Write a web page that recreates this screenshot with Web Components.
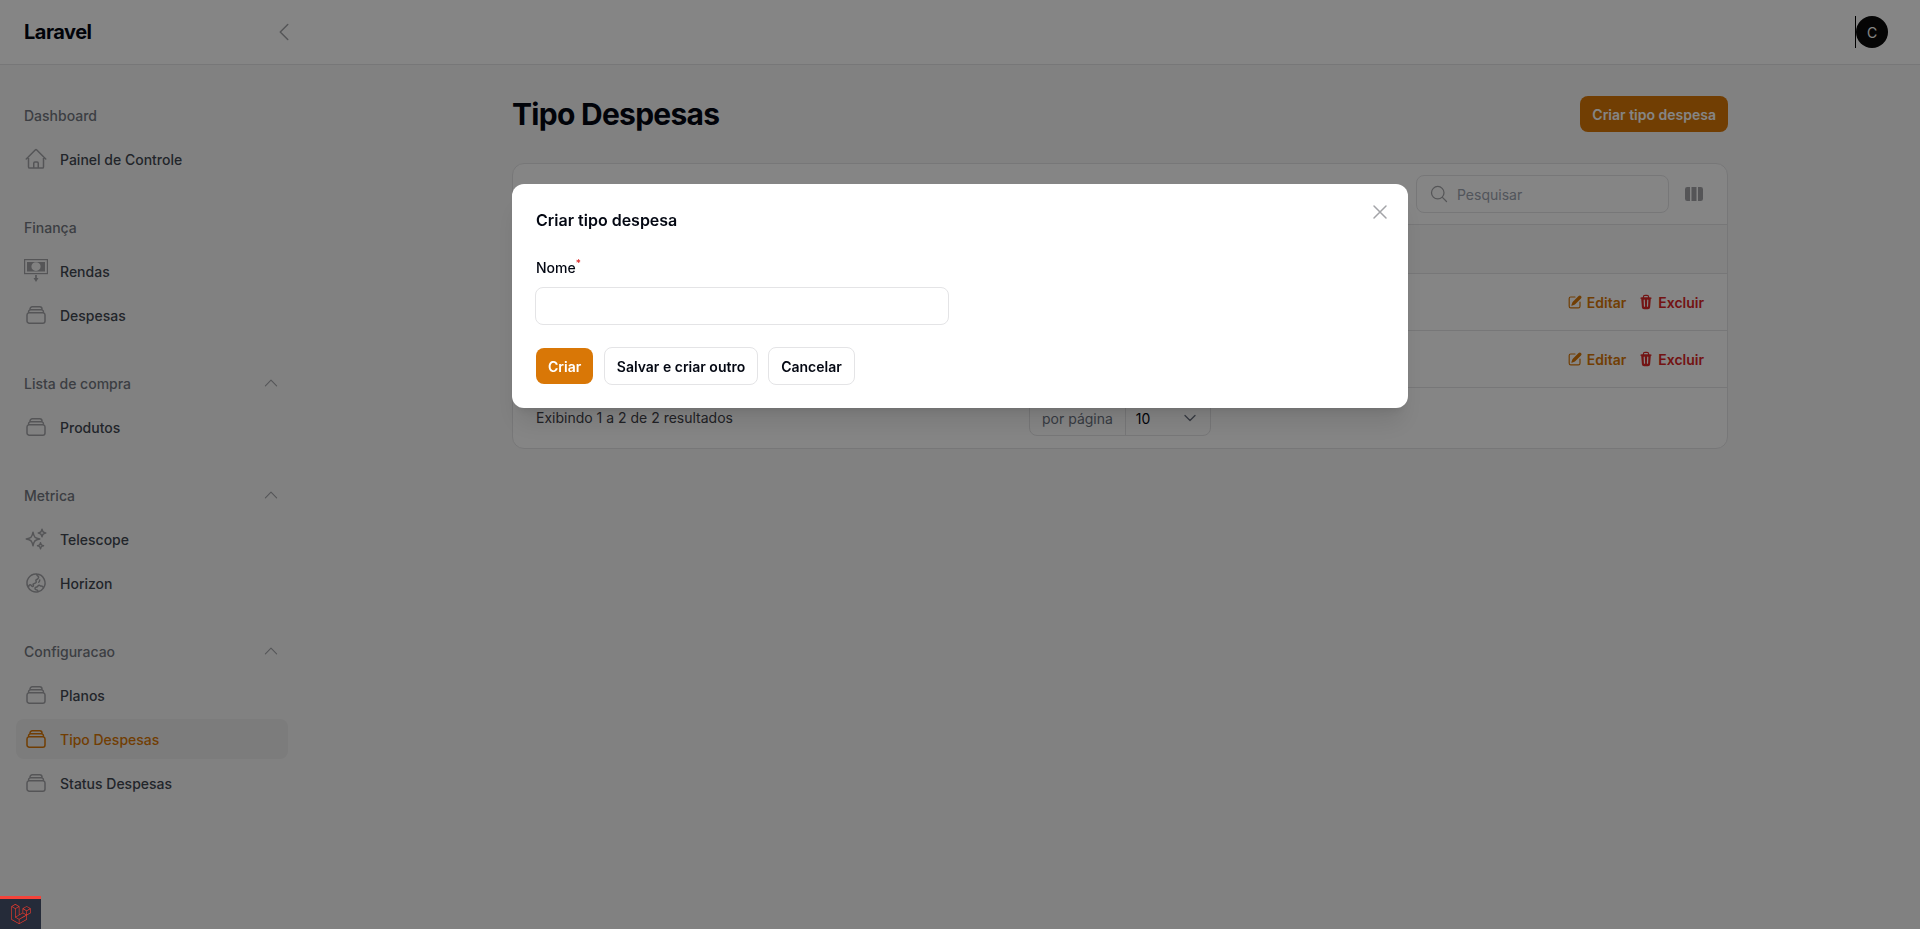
<!DOCTYPE html>
<html lang="pt"><head><meta charset="utf-8"><title>Tipo Despesas</title>
<style>
html,body{margin:0;height:100%}
body{font-family:Inter,"Liberation Sans",sans-serif;background:#f8f8f8;color:#030712;overflow:hidden}
</style></head><body>
<app-shell>
  <side-bar slot="side"></side-bar>
  <page-main slot="main"></page-main>
</app-shell>
<modal-overlay>
  <create-modal></create-modal>
</modal-overlay>
<debug-tab></debug-tab>
<script>
const P={
home:'M2.25 12l8.954-8.955c.44-.439 1.152-.439 1.591 0L21.75 12M4.5 9.75v10.125c0 .621.504 1.125 1.125 1.125H9.75v-4.875c0-.621.504-1.125 1.125-1.125h2.25c.621 0 1.125.504 1.125 1.125V21h4.125c.621 0 1.125-.504 1.125-1.125V9.75M8.25 21h8.25',
stack:'M6 6.878V6a2.25 2.25 0 012.25-2.25h7.5A2.25 2.25 0 0118 6v.878m-12 0c.235-.083.487-.128.75-.128h10.5c.263 0 .515.045.75.128m-12 0A2.251 2.251 0 004.5 9v.878m13.5-3A2.25 2.25 0 0119.5 9v.878m0 0a2.246 2.246 0 00-.75-.128H5.25c-.263 0-.515.045-.75.128m15 0A2.25 2.25 0 0121 12v6a2.25 2.25 0 01-2.25 2.25H5.25A2.25 2.25 0 013 18v-6c0-.98.626-1.813 1.5-2.122',
spark:'M9.813 15.904L9 18.75l-.813-2.846a4.5 4.5 0 00-3.09-3.09L2.25 12l2.846-.813a4.5 4.5 0 003.09-3.09L9 5.25l.813 2.846a4.5 4.5 0 003.09 3.09L15.75 12l-2.846.813a4.5 4.5 0 00-3.09 3.09zM18.259 8.715L18 9.75l-.259-1.035a3.375 3.375 0 00-2.455-2.456L14.25 6l1.036-.259a3.375 3.375 0 002.455-2.456L18 2.25l.259 1.035a3.375 3.375 0 002.456 2.456L21.75 6l-1.035.259a3.375 3.375 0 00-2.456 2.456zM16.894 20.567L16.5 21.75l-.394-1.183a2.25 2.25 0 00-1.423-1.423L13.5 18.75l1.183-.394a2.25 2.25 0 001.423-1.423l.394-1.183.394 1.183a2.25 2.25 0 001.423 1.423l1.183.394-1.183.394a2.25 2.25 0 00-1.423 1.423z',
globe:'M12.75 3.03v.568c0 .334.148.65.405.864l1.068.89c.442.369.535 1.01.216 1.49l-.51.766a2.25 2.25 0 01-1.161.886l-.143.048a1.107 1.107 0 00-.57 1.664c.369.555.169 1.307-.427 1.605L9 13.125l.423 1.059a.956.956 0 01-1.652.928l-.679-.906a1.125 1.125 0 00-1.906.172L4.5 15.75l-.612.153M12.75 3.031a9 9 0 00-8.862 12.872M12.75 3.031a9 9 0 016.69 14.036m0 0l-.177-.529A2.25 2.25 0 0017.128 15H16.5l-.324-.324a1.453 1.453 0 00-2.328.377l-.036.073a1.586 1.586 0 01-.982.816l-.99.282c-.55.157-.894.702-.8 1.267l.073.438c.08.474.49.821.97.821.846 0 1.598.542 1.865 1.345l.215.643m5.276-3.67a9.012 9.012 0 01-5.276 3.67m0 0a9 9 0 01-10.275-4.835M15.75 9c0 .896-.393 1.7-1.016 2.25',
left:'M15.75 19.5L8.25 12l7.5-7.5',
up:'M4.5 15.75l7.5-7.5 7.5 7.5',
down:'M19.5 8.25l-7.5 7.5-7.5-7.5',
x:'M6 18L18 6M6 6l12 12',
search:'M21 21l-5.197-5.197m0 0A7.5 7.5 0 105.196 5.196a7.5 7.5 0 0010.607 10.607z'
};
const G='#a3a4a8',B='#e4e4e6';
const ic=(n,s,c,w=1.5)=>`<svg width="${s}" height="${s}" viewBox="0 0 24 24" fill="none" stroke="${c}" stroke-width="${w}" stroke-linecap="round" stroke-linejoin="round" style="display:block;flex:none"><path d="${P[n]}"/></svg>`;
const rendas=c=>`<svg width="24" height="24" viewBox="0 0 24 24" style="display:block;flex:none" fill="none" stroke="${c}"><rect x=".6" y=".6" width="22.8" height="14" stroke-width="1.2"/><path fill-rule="evenodd" d="M3 3h18v9.500H3zM12 3.300C9.200 3.300 7.400 5.300 7.400 7.600S9.200 12 12 12s4.600-2 4.600-4.400S14.800 3.300 12 3.300z" fill="${c}" stroke="none"/><path d="M12 16v3.500" stroke-width="1.700"/><path d="M9.500 19h5L12 23z" fill="${c}" stroke="none"/></svg>`;
const el=(tag,html)=>customElements.define(tag,class extends HTMLElement{constructor(){super();this.attachShadow({mode:'open'}).innerHTML=html(this)}});

el('app-shell',()=>`<style>:host{display:block;height:929px}
.top{height:64px;background:#fff;border-bottom:1px solid ${B};display:flex;align-items:center;padding:0 32px 0 24px;box-sizing:content-box}
.brand{font-size:20px;font-weight:700;letter-spacing:-.5px;line-height:28px;color:#030712}
.col{margin-left:180px}
.sp{flex:1}
.bar{width:1px;height:32px;background:#000}
.ava{width:32px;height:32px;border-radius:50%;background:#0a0a0a;color:#fff;font-size:14px;display:flex;align-items:center;justify-content:center}
.body{display:flex}
.s{width:320px;flex:none}.m{flex:1;min-width:0}
</style>
<div class="top"><span class="brand">Laravel</span><span class="col">${ic('left',24,G)}</span><span class="sp"></span><span class="bar"></span><span class="ava">C</span></div>
<div class="body"><div class="s"><slot name="side"></slot></div><div class="m"><slot name="main"></slot></div></div>`);

el('nav-group',h=>`<style>:host{display:block;margin-bottom:36px}
.l{display:flex;align-items:center;justify-content:space-between;height:24px;padding:0 8px;margin-bottom:12px;font-size:14px;font-weight:500;color:#737780}
.items{display:flex;flex-direction:column;gap:4px}
</style><div class="l"><span>${h.getAttribute('label')}</span>${h.hasAttribute('open')?ic('up',18,G,1.5):''}</div><div class="items"><slot></slot></div>`);

el('nav-item',h=>{const a=h.hasAttribute('active'),n=h.getAttribute('icon'),c=a?'#d97706':G;
return `<style>:host{display:block}
.i{height:40px;display:flex;align-items:center;gap:12px;padding:0 8px;border-radius:8px;font-size:14px;font-weight:500;color:${a?'#d97706':'#424852'};background:${a?'#ededed':'transparent'}}
</style><div class="i">${n==='rendas'?rendas(c):ic(n,24,c)}<span><slot></slot></span></div>`});

el('side-bar',()=>`<style>:host{display:block;padding:38px 32px 0 16px}</style>
<nav-group label="Dashboard"><nav-item icon="home">Painel de Controle</nav-item></nav-group>
<nav-group label="Finança"><nav-item icon="rendas">Rendas</nav-item><nav-item icon="stack">Despesas</nav-item></nav-group>
<nav-group label="Lista de compra" open><nav-item icon="stack">Produtos</nav-item></nav-group>
<nav-group label="Metrica" open><nav-item icon="spark">Telescope</nav-item><nav-item icon="globe">Horizon</nav-item></nav-group>
<nav-group label="Configuracao" open><nav-item icon="stack">Planos</nav-item><nav-item icon="stack" active>Tipo Despesas</nav-item><nav-item icon="stack">Status Despesas</nav-item></nav-group>`);

el('row-actions',()=>`<style>:host{display:flex;align-items:center;justify-content:flex-end;gap:12px;padding-right:23px;font-size:14px;font-weight:600}
a{display:flex;align-items:center;gap:4px}
svg{display:block}</style>
<a style="color:#d97706"><svg width="16" height="16" viewBox="0 0 20 20" fill="currentColor"><path d="M5.433 13.917l1.262-3.155A4 4 0 017.58 9.42l6.92-6.918a2.121 2.121 0 013 3l-6.92 6.918c-.383.383-.84.685-1.343.886l-3.154 1.262a.5.5 0 01-.65-.65z"/><path d="M3.5 5.750c0-.69.56-1.250 1.250-1.250H10A.75.75 0 0010 3H4.750A2.750 2.750 0 002 5.750v9.500A2.750 2.750 0 004.750 18h9.500A2.750 2.750 0 0017 15.250V10a.75.75 0 00-1.500 0v5.250c0 .69-.56 1.250-1.250 1.250h-9.500c-.69 0-1.250-.56-1.250-1.250v-9.500z"/></svg>Editar</a>
<a style="color:#dc2626"><svg width="16" height="16" viewBox="0 0 20 20" fill="currentColor"><path fill-rule="evenodd" clip-rule="evenodd" d="M8.75 1A2.75 2.75 0 006 3.75v.443c-.795.077-1.584.176-2.365.298a.75.75 0 10.23 1.482l.149-.022.841 10.518A2.75 2.75 0 007.596 19h4.807a2.75 2.75 0 002.742-2.53l.841-10.52.149.023a.75.75 0 00.23-1.482A41.03 41.03 0 0014 4.193V3.75A2.75 2.75 0 0011.25 1h-2.5zM10 4c.84 0 1.673.025 2.5.075V3.75c0-.69-.56-1.25-1.25-1.25h-2.5c-.69 0-1.25.56-1.25 1.25v.325C8.327 4.025 9.16 4 10 4zM8.58 7.72a.75.75 0 00-1.5.06l.3 7.5a.75.75 0 101.5-.06l-.3-7.5zm4.34.06a.75.75 0 10-1.5-.06l-.3 7.5a.75.75 0 101.5.06l.3-7.5z"/></svg>Excluir</a>`);

el('page-main',()=>`<style>:host{display:block;max-width:1216px;margin:0 auto;padding-top:31px}
.hd{display:flex;justify-content:space-between;align-items:center;height:36px}
h1{margin:0;font-size:30px;font-weight:700;letter-spacing:-.72px;line-height:36px;color:#030712}
.cta{height:36px;padding:0 12px;display:flex;align-items:center;background:#d97706;color:#fff;font-size:14px;font-weight:600;border-radius:8px}
.card{margin-top:31px;height:286px;box-sizing:border-box;background:#fff;border:1px solid ${B};border-radius:12px;display:flex;flex-direction:column}
.tb{height:60px;display:flex;align-items:center;justify-content:flex-end;gap:15px;padding:0 23px 0 24px;flex:none}
.search{width:253px;height:38px;box-sizing:border-box;border:1px solid ${B};border-radius:8px;display:flex;align-items:center;gap:8px;padding:0 12px;font-size:14px;color:#9ca3af}
.r{border-top:1px solid ${B};flex:none;display:flex;justify-content:flex-end}
.h{height:48px;background:#fafafa}
.a{height:56px}
.f{border-top:1px solid ${B};flex:1;display:grid;grid-template-columns:1fr auto 1fr;align-items:center;padding:0 23px;font-size:14px;color:#3f4148}
.f>span:first-child{margin-top:-2px}
.pp{width:182px;height:36px;box-sizing:border-box;border:1px solid ${B};border-radius:8px;display:flex;align-items:center;font-size:14px}
.pp b{font-weight:400;color:#6b7280;padding:0 12px;height:100%;display:flex;align-items:center;border-right:1px solid ${B};white-space:nowrap}
.pp i{font-style:normal;color:#030712;padding-left:10px;flex:1}
.pp span{padding-right:12px}
</style>
<div class="hd"><h1>Tipo Despesas</h1><div class="cta">Criar tipo despesa</div></div>
<div class="card">
<div class="tb"><div class="search">${ic('search',20,G)}<span>Pesquisar</span></div>
<svg width="20" height="20" viewBox="0 0 20 20" fill="${G}" style="flex:none"><path d="M14 17h2.75A2.25 2.25 0 0019 14.75v-9.5A2.25 2.25 0 0016.75 3H14v14zM12.5 3h-5v14h5V3zM6 3H3.25A2.25 2.25 0 001 5.25v9.5A2.25 2.25 0 003.25 17H6V3z"/></svg></div>
<div class="r h"></div>
<div class="r a"><row-actions></row-actions></div>
<div class="r a"><row-actions></row-actions></div>
<div class="f"><span>Exibindo 1 a 2 de 2 resultados</span><div class="pp"><b>por página</b><i>10</i><span>${ic('down',16,'#6b7280',2)}</span></div><span></span></div>
</div>`);

el('modal-overlay',()=>`<style>:host{position:fixed;inset:0;background:rgba(0,0,0,.48);display:block;z-index:10}
.w{position:absolute;left:512px;top:184px}</style><div class="w"><slot></slot></div>`);

el('create-modal',()=>`<style>:host{display:block;width:896px;height:224px;box-sizing:border-box;background:#fff;border-radius:12px;padding:24px;box-shadow:0 20px 25px -5px rgba(0,0,0,.1),0 8px 10px -6px rgba(0,0,0,.1);position:relative}
h2{margin:0;font-size:16px;line-height:24px;font-weight:600;color:#030712}
.x{position:absolute;right:16px;top:16px}
.lb{margin-top:24px;font-size:14px;font-weight:500;line-height:24px;color:#030712}
sup{color:#dc2626;font-size:10px;line-height:0;font-weight:500}
.in{margin-top:7px;width:414px;height:38px;box-sizing:border-box;background:#fff;border:1px solid ${B};border-radius:8px;margin-left:-1px}
.ac{margin-top:22px;display:flex;gap:10px;align-items:center}
.b{height:38px;box-sizing:border-box;border:1px solid ${B};border-radius:8px;display:flex;align-items:center;padding:0 12px;font-size:14px;font-weight:600;color:#030712;background:#fff}
.p{height:36px;background:#d97706;border:0;color:#fff;margin-right:1px}
.s{padding:0 11.5px}
.c{padding:0 12.5px}
</style>
<h2>Criar tipo despesa</h2><span class="x">${ic('x',24,G)}</span>
<div class="lb">Nome<sup>*</sup></div><div class="in"></div>
<div class="ac"><div class="b p">Criar</div><div class="b s">Salvar e criar outro</div><div class="b c">Cancelar</div></div>`);

el('debug-tab',()=>`<style>:host{position:fixed;left:0;bottom:0;width:41px;height:33px;box-sizing:border-box;border-top:3px solid #f4433a;background:#252b39;z-index:20;display:flex;align-items:center;justify-content:center}
</style><svg width="20" height="20" viewBox="0 0 24 24" fill="#ef3b2d" style="display:block;margin-left:1px"><path d="M23.642 5.43a.364.364 0 01.014.1v5.149c0 .135-.073.26-.189.326l-4.323 2.49v4.934a.378.378 0 01-.188.326L9.93 23.949a.316.316 0 01-.066.027c-.008.002-.016.008-.024.01a.348.348 0 01-.192 0c-.011-.002-.02-.008-.03-.012-.02-.008-.042-.014-.062-.025L.533 18.755a.376.376 0 01-.189-.326V2.974c0-.033.005-.066.014-.098.003-.012.01-.02.014-.032a.369.369 0 01.023-.058c.004-.013.015-.022.023-.033l.033-.045c.012-.01.025-.018.037-.027.014-.012.027-.024.041-.034H.53L5.043.05a.375.375 0 01.375 0L9.93 2.647h.002c.015.01.027.021.04.033l.038.027c.013.014.02.03.033.045.008.011.02.021.025.033.01.02.017.038.024.058.003.011.01.021.013.032.01.031.014.064.014.098v9.652l3.76-2.164V5.527c0-.033.004-.066.013-.098.003-.01.01-.02.013-.032a.487.487 0 01.024-.059c.007-.012.018-.02.025-.033.012-.015.021-.03.033-.043.012-.012.025-.02.037-.028.014-.01.026-.023.041-.032h.001l4.513-2.598a.375.375 0 01.375 0l4.513 2.598c.016.01.027.021.042.031.012.01.025.018.036.028.013.014.022.03.034.044.008.012.019.021.024.033.011.02.018.04.024.06.006.01.012.021.015.032zm-.74 5.032V6.179l-1.578.908-2.182 1.256v4.283zm-4.51 7.75v-4.287l-2.147 1.225-6.126 3.498v4.325zM1.093 3.624v14.588l8.273 4.761v-4.325l-4.322-2.445-.002-.003H5.04c-.014-.01-.025-.021-.04-.031-.011-.01-.024-.018-.035-.027l-.001-.002c-.013-.012-.021-.025-.031-.04-.01-.011-.021-.022-.028-.036h-.002c-.008-.014-.013-.031-.02-.047-.006-.016-.014-.027-.018-.043a.49.49 0 01-.008-.057c-.002-.014-.006-.027-.006-.041V5.789l-2.18-1.257zM5.23.81L1.47 2.974l3.76 2.164 3.758-2.164zm1.956 13.505l2.182-1.256V3.624l-1.58.91-2.182 1.255v9.435zm11.581-10.95l-3.76 2.163 3.76 2.163 3.759-2.164zm-.376 4.978L16.21 7.087 14.63 6.18v4.283l2.182 1.256 1.58.908zm-8.65 9.654l5.514-3.148 2.756-1.572-3.757-2.163-4.323 2.489-3.941 2.27z"/></svg>`);
</script>
</body></html>
